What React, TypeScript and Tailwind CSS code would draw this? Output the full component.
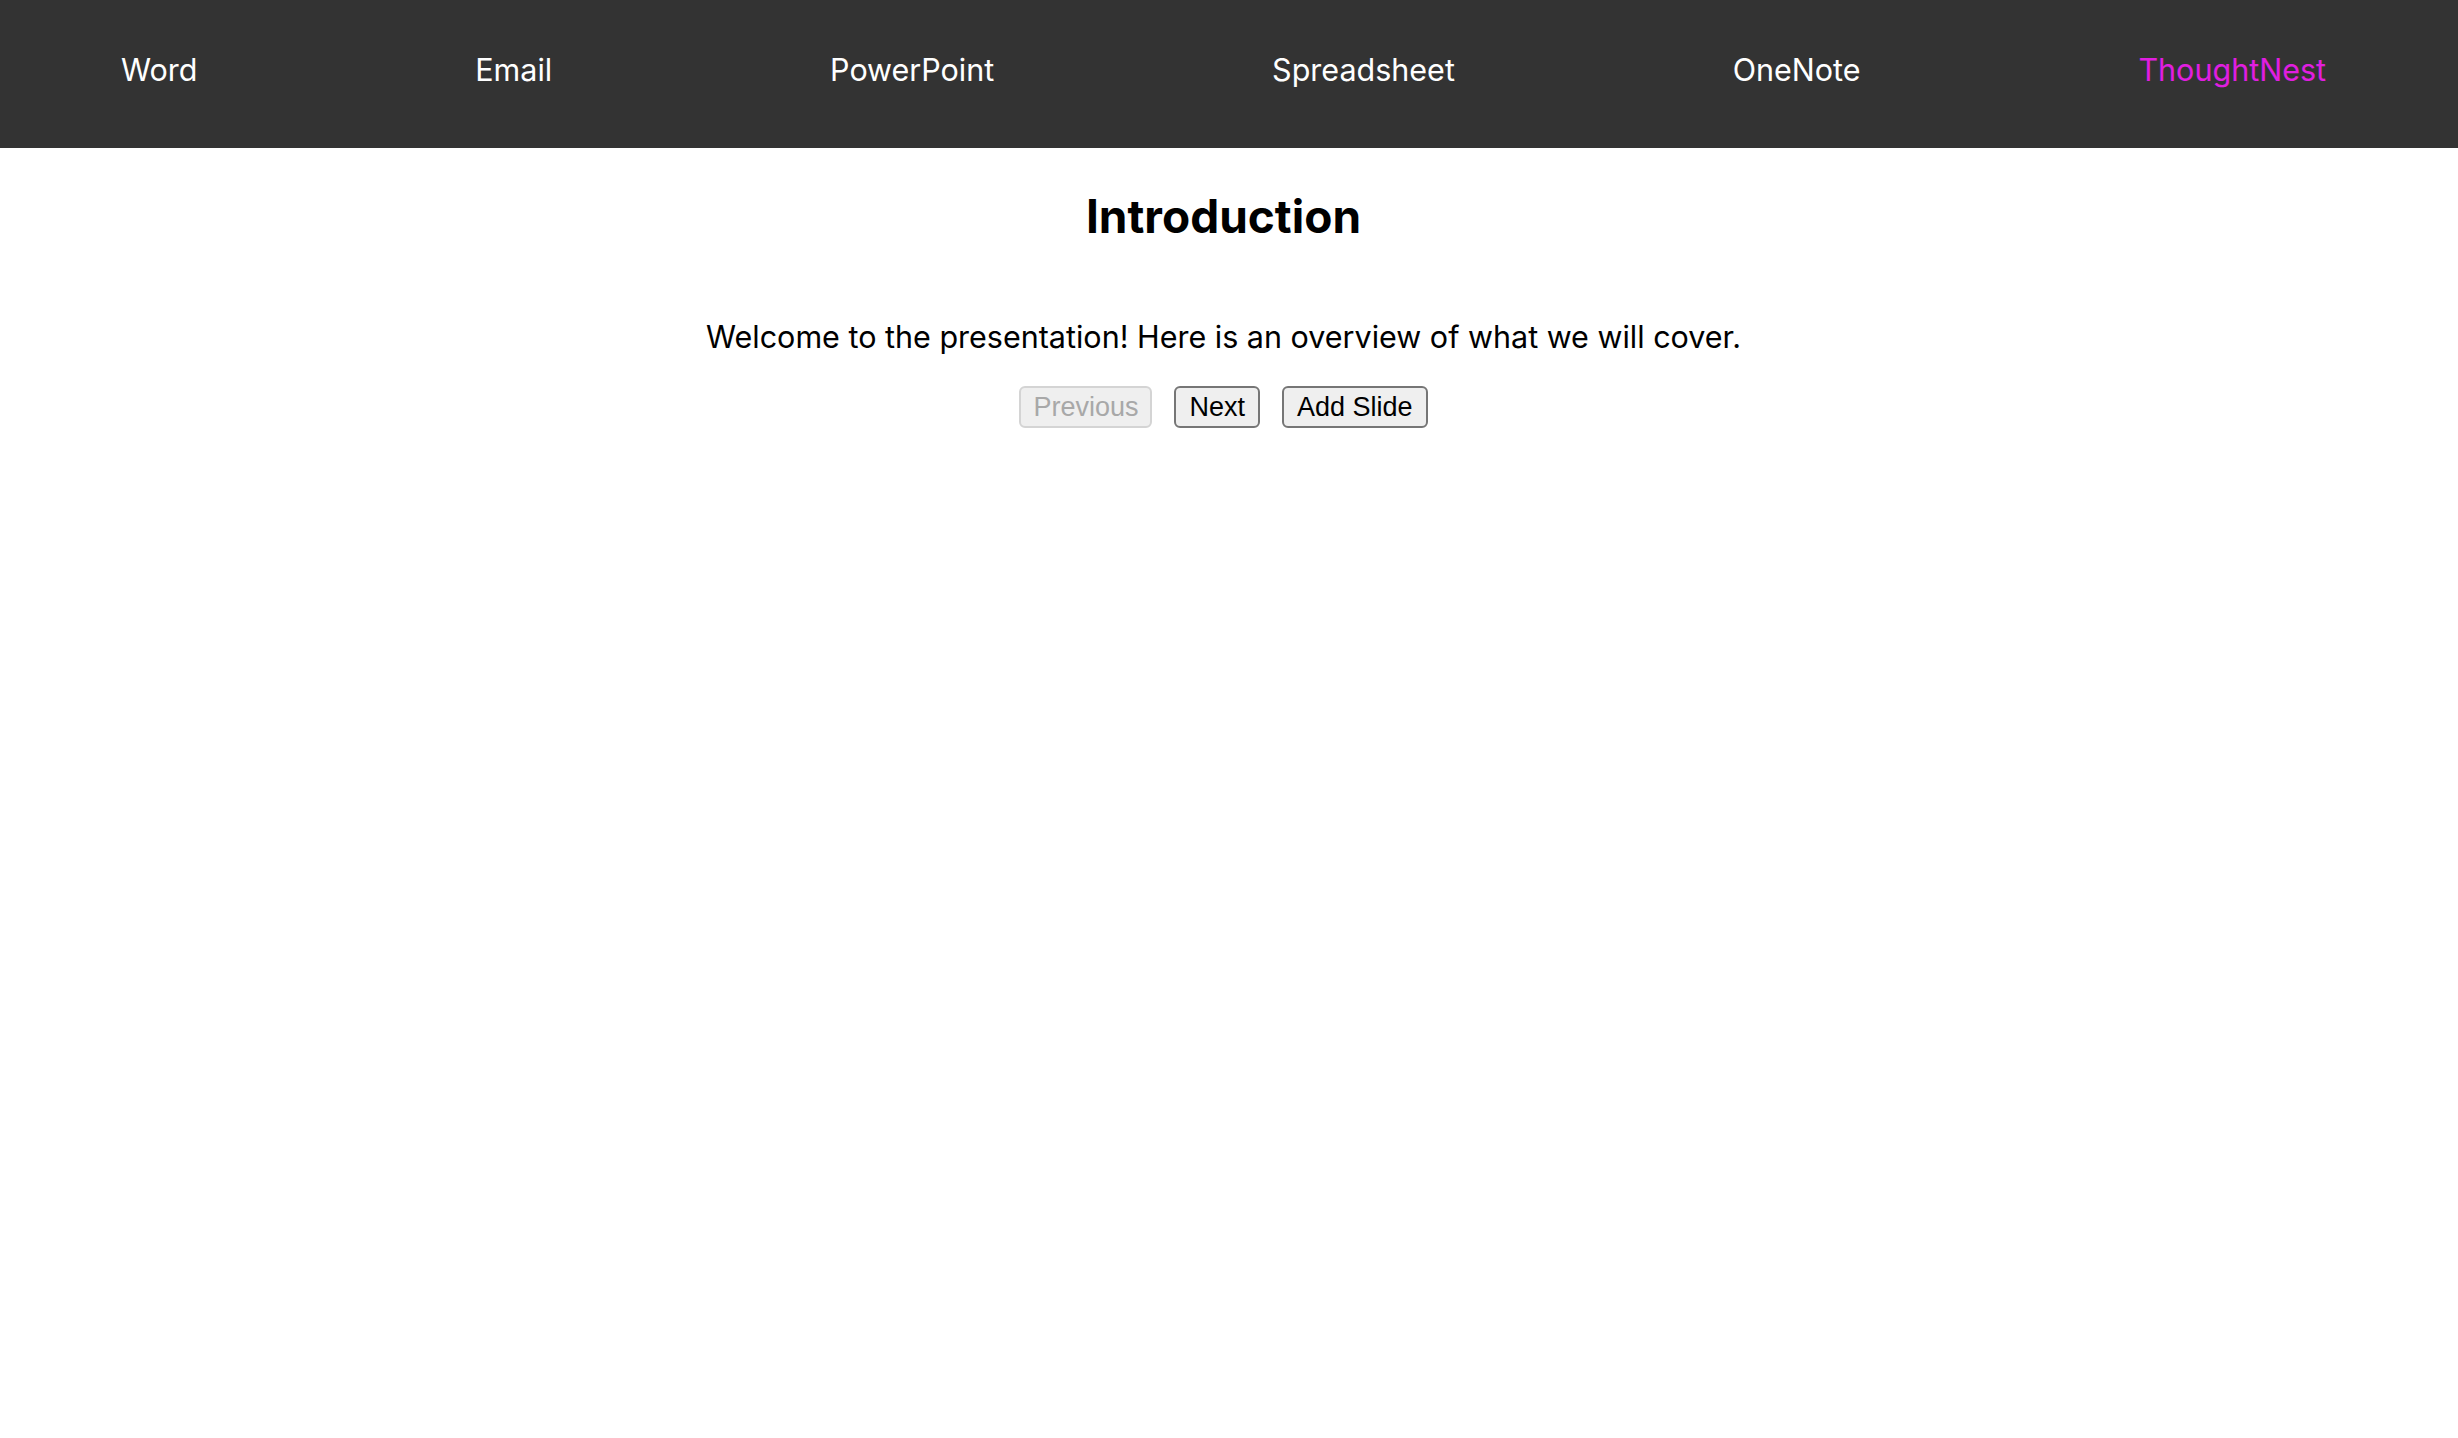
import { useState } from "react";

const apps = ["Word", "Email", "PowerPoint", "Spreadsheet", "OneNote", "ThoughtNest"];

const slides = [
  {
    title: "Introduction",
    body: "Welcome to the presentation! Here is an overview of what we will cover.",
  },
];

export default function App() {
  const [index, setIndex] = useState(0);
  const slide = slides[index];

  return (
    <div className="min-h-screen bg-white font-['Inter',sans-serif] text-black">
      {/* Top nav */}
      <nav className="flex h-[148px] items-center justify-between bg-[#333333] pb-[9px] pl-[121px] pr-[132px]">
        {apps.map((app) => (
          <a
            key={app}
            href="#"
            className={
              app === "ThoughtNest"
                ? "text-[30.5px] leading-normal text-[#e01ee0]"
                : "text-[30.5px] leading-normal text-white"
            }
          >
            {app}
          </a>
        ))}
      </nav>

      {/* Slide */}
      <main className="flex flex-col items-center pr-[11px] pt-[39px] text-center">
        <h2 className="text-[46px] font-bold leading-[58px]">{slide.title}</h2>
        <p className="mt-[69px] text-[30.5px] leading-[45px]">{slide.body}</p>
        <div className="mt-[27px] flex gap-[22px] font-['Liberation_Sans',Arial,sans-serif] text-[27px] leading-none">
          <button
            type="button"
            disabled={index === 0}
            onClick={() => setIndex(index - 1)}
            className="h-[42px] rounded-[6px] border-2 border-[#d4d4d4] bg-[#efefef] px-[12px] text-[#a8a8a8]"
          >
            Previous
          </button>
          <button
            type="button"
            onClick={() => setIndex(Math.min(index + 1, slides.length - 1))}
            className="h-[42px] rounded-[6px] border-2 border-[#767676] bg-[#efefef] px-[13px]"
          >
            Next
          </button>
          <button
            type="button"
            className="h-[42px] rounded-[6px] border-2 border-[#767676] bg-[#efefef] px-[13px]"
          >
            Add Slide
          </button>
        </div>
      </main>
    </div>
  );
}
